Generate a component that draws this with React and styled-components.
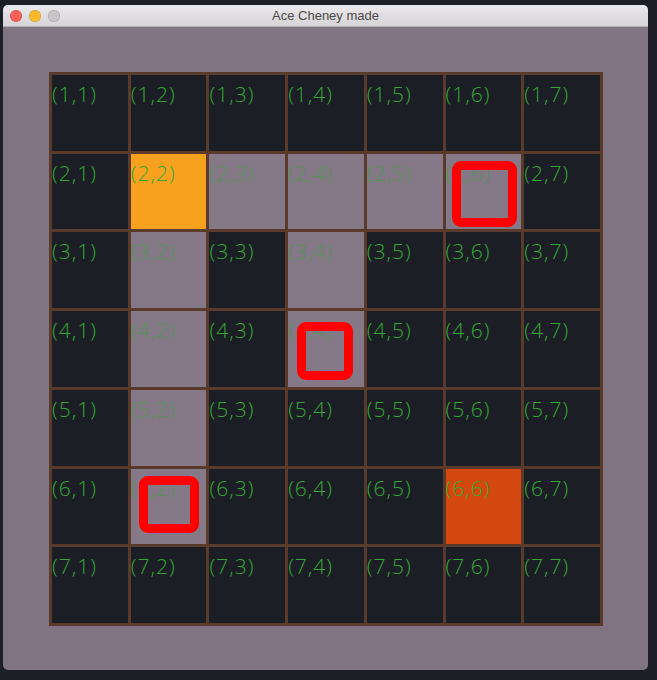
import React from "react";
import styled, { createGlobalStyle } from "styled-components";

const GlobalStyle = createGlobalStyle`
  html, body {
    margin: 0;
    padding: 0;
    background: #1c2026;
  }
  body {
    width: 657px;
    height: 680px;
    overflow: hidden;
  }
`;

const Desktop = styled.div`
  padding: 5px 0 0 3px;
`;

const Window = styled.div`
  width: 645px;
  height: 665px;
  display: flex;
  flex-direction: column;
  border-radius: 5px;
  overflow: hidden;
  background: #807483;
`;

const TitleBar = styled.div`
  position: relative;
  height: 21px;
  flex-shrink: 0;
  display: flex;
  align-items: center;
  justify-content: center;
  background: linear-gradient(#ebe9eb, #d6d4d6);
  border-bottom: 1px solid #b3b1b3;
  font-family: "Liberation Sans", Arial, sans-serif;
  font-size: 13px;
  color: #4a4a4a;
`;

const Lights = styled.div`
  position: absolute;
  left: 7px;
  top: 5px;
  display: flex;
  gap: 7px;
`;

const Light = styled.span`
  width: 12px;
  height: 12px;
  border-radius: 50%;
  background: ${(p) => p.color};
  box-shadow: inset 0 0 0 0.5px rgba(0, 0, 0, 0.2);
`;

const Content = styled.div`
  flex: 1;
  padding: 45px 0 0 46px;
`;

const Board = styled.div`
  width: 554px;
  height: 554px;
  box-sizing: border-box;
  padding: 3px;
  display: grid;
  grid-template-columns: repeat(7, 1fr);
  grid-template-rows: repeat(7, 1fr);
  gap: 3px;
  background: #5a3a2a;
`;

const cellColors = {
  wall: "#1b1f25",
  path: "#857987",
  start: "#f8a11e",
  end: "#d4470e",
};

const Cell = styled.div`
  position: relative;
  background: ${(p) => cellColors[p.kind]};
`;

const Label = styled.span`
  position: absolute;
  left: 0;
  top: 5px;
  font-family: "Open Sans", "DejaVu Sans", sans-serif;
  font-weight: 300;
  font-size: 21px;
  letter-spacing: 1px;
  color: #34a834;
  opacity: ${(p) => (p.faded ? 0.6 : 1)};
`;

const Marker = styled.div`
  position: absolute;
  box-sizing: border-box;
  border: 9px solid #ff0000;
  border-radius: 9px;
`;

const pathCells = ["2,3", "2,4", "2,5", "2,6", "3,2", "3,4", "4,2", "4,4", "5,2", "6,2"];

const markers = {
  "2,6": { left: 6, top: 7, width: 65, height: 66 },
  "4,4": { left: 9, top: 11, width: 56, height: 58 },
  "6,2": { left: 8, top: 7, width: 60, height: 57 },
};

const kindOf = (key) => {
  if (key === "2,2") return "start";
  if (key === "6,6") return "end";
  if (pathCells.includes(key)) return "path";
  return "wall";
};

export default function App() {
  const cells = [];
  for (let r = 1; r <= 7; r++) {
    for (let c = 1; c <= 7; c++) {
      const key = `${r},${c}`;
      const kind = kindOf(key);
      cells.push(
        <Cell key={key} kind={kind}>
          <Label faded={kind === "path"}>({key})</Label>
          {markers[key] && <Marker style={markers[key]} />}
        </Cell>
      );
    }
  }

  return (
    <>
      <GlobalStyle />
      <Desktop>
        <Window>
          <TitleBar>
            <Lights>
              <Light color="#fc5f57" />
              <Light color="#fdbc2e" />
              <Light color="#c8c6c8" />
            </Lights>
            Ace Cheney made
          </TitleBar>
          <Content>
            <Board>{cells}</Board>
          </Content>
        </Window>
      </Desktop>
    </>
  );
}
